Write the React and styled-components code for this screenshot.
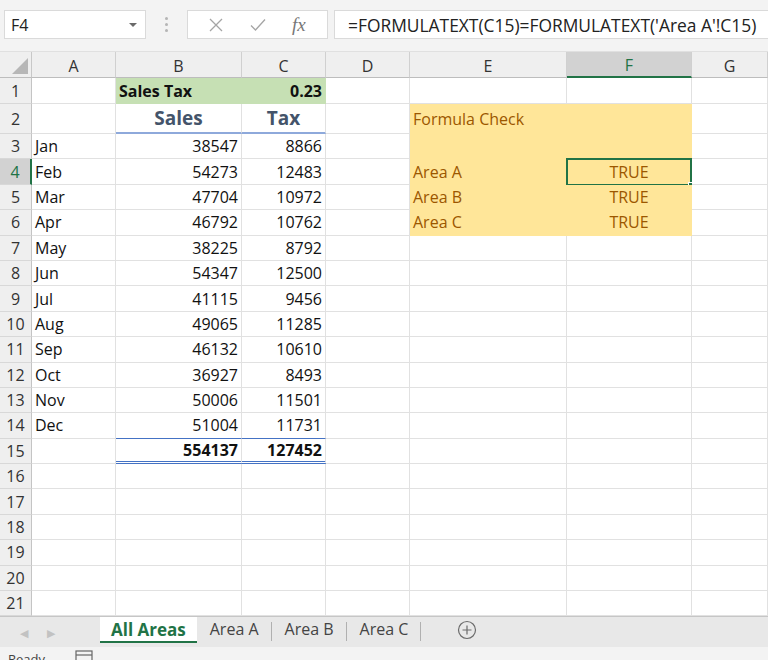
import React from 'react';
import styled, { createGlobalStyle } from 'styled-components';

const GlobalStyle = createGlobalStyle`
  html, body { margin: 0; padding: 0; background: #fff; overflow: hidden; }
  body { font-family: "Open Sans", "Noto Sans", sans-serif; width: 768px; height: 660px; }
  * { box-sizing: border-box; }
`;

const COLS = '32px 84px 126px 84px 84px 157px 125px 1fr';
const GRID = '#e1e1e1';
const GREEN = '#217346';
const FILL_GREEN = '#c6e0b4';
const FILL_YELLOW = '#ffe699';
const YELLOW_TEXT = '#9c5700';

const Page = styled.div`
  display: flex;
  flex-direction: column;
  height: 660px;
  overflow: hidden;
  & > * { flex-shrink: 0; }
`;

const FormulaBar = styled.div`
  display: flex;
  align-items: flex-start;
  height: 52px;
  padding: 10px 0 0 4px;
  background: #f3f3f3;
  border-bottom: 1px solid #e0e0e0;
`;

const Box = styled.div`
  height: 29px;
  background: #fff;
  border: 1px solid #dadada;
  display: flex;
  align-items: center;
`;

const NameBox = styled(Box)`
  width: 142px;
  padding: 0 8px 0 6px;
  justify-content: space-between;
  font-size: 16px;
  color: #222;
`;

const DropArrow = styled.span`
  width: 0;
  height: 0;
  border-left: 4px solid transparent;
  border-right: 4px solid transparent;
  border-top: 4px solid #6a6a6a;
`;

const Grip = styled.div`
  width: 41px;
  height: 29px;
  display: flex;
  flex-direction: column;
  align-items: center;
  justify-content: center;
  gap: 3px;
  span { width: 3px; height: 3px; border-radius: 50%; background: #b5b5b5; }
`;

const ButtonsBox = styled(Box)`
  width: 141px;
  justify-content: space-around;
  padding: 0 8px;
  color: #9a9a9a;
`;

const Fx = styled.span`
  font-family: "Liberation Serif", "DejaVu Serif", serif;
  font-style: italic;
  font-size: 19px;
  color: #777;
`;

const FormulaInput = styled(Box)`
  flex: 1;
  margin-left: 6px;
  padding-left: 13px;
  font-size: 17.4px;
  color: #222;
  white-space: nowrap;
  overflow: hidden;
  border-right: none;
`;

const Sheet = styled.div`
  display: flex;
  flex-direction: column;
  & > * { flex-shrink: 0; }
`;

const Row = styled.div`
  display: grid;
  grid-template-columns: ${COLS};
  height: ${p => p.$h}px;
`;

const Corner = styled.div`
  position: relative;
  background: #efefef;
  border-right: 1px solid #c8c8c8;
  border-bottom: 1px solid #bdbdbd;
  &::after {
    content: '';
    position: absolute;
    right: 3px;
    bottom: 3px;
    width: 0;
    height: 0;
    border-left: 16px solid transparent;
    border-bottom: 16px solid #b7b7b7;
  }
`;

const ColHead = styled.div`
  display: flex;
  align-items: center;
  justify-content: center;
  font-size: 16px;
  color: ${p => (p.$sel ? GREEN : '#333')};
  background: ${p => (p.$sel ? '#d2d2d2' : '#efefef')};
  border-right: 1px solid #d0d0d0;
  border-bottom: ${p => (p.$sel ? `2px solid ${GREEN}` : '1px solid #bdbdbd')};
  padding-top: 2px;
`;

const RowHead = styled.div`
  display: flex;
  align-items: center;
  justify-content: center;
  font-size: 16px;
  color: ${p => (p.$sel ? GREEN : '#333')};
  background: ${p => (p.$sel ? '#d2d2d2' : '#efefef')};
  border-right: ${p => (p.$sel ? `2px solid ${GREEN}` : '1px solid #c4c4c4')};
  border-bottom: 1px solid #d8d8d8;
`;

const Cell = styled.div`
  position: relative;
  display: flex;
  align-items: center;
  justify-content: ${p => (p.$align === 'r' ? 'flex-end' : p.$align === 'c' ? 'center' : 'flex-start')};
  padding: 0 3px;
  min-width: 0;
  white-space: nowrap;
  font-size: ${p => (p.$big ? 19 : 16)}px;
  font-weight: ${p => (p.$bold ? 700 : 400)};
  color: ${p => p.$color || '#111'};
  background: ${p => p.$fill || '#fff'};
  border-right: 1px solid ${p => p.$fill || GRID};
  border-bottom: ${p => p.$bottom || `1px solid ${p.$fill || GRID}`};
`;

const Selection = styled.div`
  position: absolute;
  inset: -1px -1px -2px -1px;
  border: 2px solid ${GREEN};
  pointer-events: none;
`;

const Handle = styled.span`
  position: absolute;
  right: -4px;
  bottom: -4px;
  width: 6px;
  height: 6px;
  background: ${GREEN};
  border: 1px solid #fff;
`;

const TabBar = styled.div`
  display: flex;
  align-items: stretch;
  height: 31px;
  background: #e8e8e8;
  border-top: 1px solid #c6c6c6;
`;

const Nav = styled.div`
  width: 100px;
  display: flex;
  align-items: center;
  padding-left: 20px;
  gap: 19px;
  color: #c2c2c2;
  font-size: 11px;
`;

const Tab = styled.div`
  display: flex;
  align-items: center;
  padding: ${p => (p.$active ? '0 11px 0 11px' : '0 13px')};
  margin-bottom: 4px;
  font-size: ${p => (p.$active ? 17 : 16)}px;
  font-weight: ${p => (p.$active ? 700 : 400)};
  color: ${p => (p.$active ? GREEN : '#444')};
  background: ${p => (p.$active ? '#fff' : 'transparent')};
  border-bottom: ${p => (p.$active ? `2px solid ${GREEN}` : '2px solid transparent')};
  position: relative;
  &::after {
    content: '';
    display: ${p => (p.$sep ? 'block' : 'none')};
    position: absolute;
    right: 0;
    top: 5px;
    bottom: 0;
    border-right: 1px solid #b0b0b0;
  }
`;

const AddTab = styled.div`
  display: flex;
  align-items: center;
  margin-left: 36px;
  margin-bottom: 4px;
`;

const StatusBar = styled.div`
  height: 20px;
  background: #f3f3f3;
  display: flex;
  align-items: flex-start;
  padding: 3px 0 0 8px;
  gap: 30px;
  font-size: 13px;
  color: #444;
`;

const months = [
  ['Jan', 38547, 8866], ['Feb', 54273, 12483], ['Mar', 47704, 10972], ['Apr', 46792, 10762],
  ['May', 38225, 8792], ['Jun', 54347, 12500], ['Jul', 41115, 9456], ['Aug', 49065, 11285],
  ['Sep', 46132, 10610], ['Oct', 36927, 8493], ['Nov', 50006, 11501], ['Dec', 51004, 11731],
];

const yellow = {
  2: ['Formula Check', ''],
  3: ['', ''],
  4: ['Area A', 'TRUE'],
  5: ['Area B', 'TRUE'],
  6: ['Area C', 'TRUE'],
};

function buildRows() {
  const rows = [];
  for (let r = 1; r <= 21; r++) {
    const cells = Array.from({ length: 7 }, () => ({}));
    if (r === 1) {
      cells[1] = { t: 'Sales Tax', bold: true, fill: FILL_GREEN };
      cells[2] = { t: '0.23', bold: true, fill: FILL_GREEN, align: 'r' };
    }
    if (r === 2) {
      cells[1] = { t: 'Sales', bold: true, big: true, align: 'c', color: '#44546a', bottom: '2px solid #8ea9db' };
      cells[2] = { t: 'Tax', bold: true, big: true, align: 'c', color: '#44546a', bottom: '2px solid #8ea9db' };
    }
    if (r >= 3 && r <= 14) {
      const [m, s, t] = months[r - 3];
      const bottom = r === 14 ? '1px solid #4472c4' : undefined;
      cells[0] = { t: m };
      cells[1] = { t: String(s), align: 'r', bottom };
      cells[2] = { t: String(t), align: 'r', bottom };
    }
    if (r === 15) {
      cells[1] = { t: '554137', bold: true, align: 'r', bottom: '3px double #4472c4' };
      cells[2] = { t: '127452', bold: true, align: 'r', bottom: '3px double #4472c4' };
    }
    if (yellow[r]) {
      cells[4] = { t: yellow[r][0], fill: FILL_YELLOW, color: YELLOW_TEXT };
      cells[5] = { t: yellow[r][1], fill: FILL_YELLOW, color: YELLOW_TEXT, align: 'c', sel: r === 4 };
    }
    rows.push({ r, h: r === 1 ? 26 : r === 2 ? 30 : 25.4, cells });
  }
  return rows;
}

const colLetters = ['A', 'B', 'C', 'D', 'E', 'F', 'G'];

export default function App() {
  const rows = buildRows();
  return (
    <Page>
      <GlobalStyle />
      <FormulaBar>
        <NameBox>
          <span>F4</span>
          <DropArrow />
        </NameBox>
        <Grip><span /><span /><span /></Grip>
        <ButtonsBox>
          <svg width="14" height="14" viewBox="0 0 14 14"><path d="M1 1 L13 13 M13 1 L1 13" stroke="#a5a5a5" strokeWidth="1.3" fill="none" /></svg>
          <svg width="16" height="14" viewBox="0 0 16 14"><path d="M1 7.5 L5.5 12 L15 1.5" stroke="#a5a5a5" strokeWidth="1.3" fill="none" /></svg>
          <Fx>fx</Fx>
        </ButtonsBox>
        <FormulaInput>=FORMULATEXT(C15)=FORMULATEXT('Area A'!C15)</FormulaInput>
      </FormulaBar>

      <Sheet>
        <Row $h={26}>
          <Corner />
          {colLetters.map(c => (
            <ColHead key={c} $sel={c === 'F'}>{c}</ColHead>
          ))}
        </Row>
        {rows.map(row => (
          <Row key={row.r} $h={row.h}>
            <RowHead $sel={row.r === 4}>{row.r}</RowHead>
            {row.cells.map((c, i) => (
              <Cell
                key={i}
                $align={c.align}
                $bold={c.bold}
                $big={c.big}
                $color={c.color}
                $fill={c.fill}
                $bottom={c.bottom}
              >
                {c.t}
                {c.sel && (
                  <Selection>
                    <Handle />
                  </Selection>
                )}
              </Cell>
            ))}
          </Row>
        ))}
      </Sheet>

      <TabBar>
        <Nav>
          <span>◀</span>
          <span>▶</span>
        </Nav>
        <Tab $active>All Areas</Tab>
        <Tab $sep>Area A</Tab>
        <Tab $sep>Area B</Tab>
        <Tab $sep>Area C</Tab>
        <AddTab>
          <svg width="20" height="20" viewBox="0 0 20 20">
            <circle cx="10" cy="10" r="8.5" stroke="#6b6b6b" strokeWidth="1.2" fill="none" />
            <path d="M10 5.5 V14.5 M5.5 10 H14.5" stroke="#6b6b6b" strokeWidth="1.2" />
          </svg>
        </AddTab>
      </TabBar>
      <StatusBar>
        <span>Ready</span>
        <svg width="18" height="14" viewBox="0 0 18 14"><rect x="1" y="1" width="16" height="12" fill="none" stroke="#666" strokeWidth="1.2" /><path d="M1 5 H17" stroke="#666" strokeWidth="1.2" /></svg>
      </StatusBar>
    </Page>
  );
}
